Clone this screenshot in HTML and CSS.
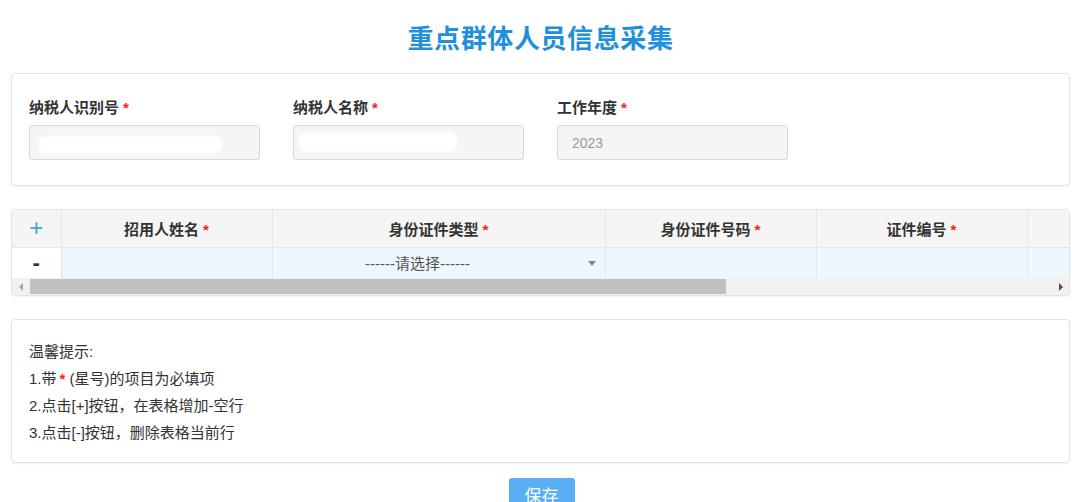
FILE: index.html
```html
<!DOCTYPE html>
<html lang="zh-CN">
<head>
<meta charset="utf-8">
<title>重点群体人员信息采集</title>
<link rel="stylesheet" href="styles.css">
</head>
<body>
<div class="page">
  <h1 class="title">重点群体人员信息采集</h1>

  <div class="panel form-panel">
    <div class="field">
      <div class="label">纳税人识别号<span class="req">*</span></div>
      <div class="input"><span class="smudge smudge-a"></span></div>
    </div>
    <div class="field">
      <div class="label">纳税人名称<span class="req">*</span></div>
      <div class="input"><span class="smudge smudge-b"></span></div>
    </div>
    <div class="field">
      <div class="label">工作年度<span class="req">*</span></div>
      <div class="input"><span class="value">2023</span></div>
    </div>
  </div>

  <div class="panel table-panel">
    <div class="table-clip">
      <table class="grid">
        <colgroup>
          <col class="c-op"><col class="c-w"><col class="c-wide"><col class="c-w"><col class="c-w"><col class="c-w"><col class="c-rest">
        </colgroup>
        <thead>
          <tr>
            <th class="op plus">+</th>
            <th>招用人姓名<span class="req">*</span></th>
            <th>身份证件类型<span class="req">*</span></th>
            <th>身份证件号码<span class="req">*</span></th>
            <th>证件编号<span class="req">*</span></th>
            <th></th>
            <th></th>
          </tr>
        </thead>
        <tbody>
          <tr>
            <td class="op minus">-</td>
            <td></td>
            <td class="select-cell"><span class="select-text">------请选择------</span><span class="caret"></span></td>
            <td></td>
            <td></td>
            <td></td>
            <td></td>
          </tr>
        </tbody>
      </table>
    </div>
    <div class="hscroll">
      <div class="sb-btn"><span class="tri-left"></span></div>
      <div class="sb-track">
        <div class="sb-thumb"></div>
      </div>
      <div class="sb-btn"><span class="tri-right"></span></div>
    </div>
  </div>

  <div class="panel tips-panel">
    <p>温馨提示:</p>
    <p>1.带<span class="req">*</span> (星号)的项目为必填项</p>
    <p>2.点击[+]按钮，在表格增加-空行</p>
    <p>3.点击[-]按钮，删除表格当前行</p>
  </div>

  <div class="actions">
    <button class="btn-save" type="button">保存</button>
  </div>
</div>
</body>
</html>
```

FILE: styles.css
```css
* { box-sizing: border-box; }

html, body {
  margin: 0;
  padding: 0;
  background: #ffffff;
  overflow: hidden;
}

body {
  font-family: "Liberation Sans", "Noto Sans CJK SC", sans-serif;
  color: #333333;
}

.page {
  padding: 0 10px 0 11px;
}

.title {
  margin: 0;
  padding-top: 21px;
  height: 73px;
  text-align: center;
  font-size: 26px;
  line-height: 36px;
  font-weight: 700;
  color: #1e90de;
  letter-spacing: 0.6px;
}

.panel {
  border: 1px solid #e3e3e3;
  border-radius: 4px;
  background: #ffffff;
  box-shadow: 0 1px 2px rgba(0, 0, 0, 0.06);
}

.req {
  color: #ff1a1a;
  font-weight: 700;
  margin-left: 4px;
}

/* form panel */
.form-panel {
  display: flex;
  gap: 33px;
  padding: 24px 17px 26px 17px;
  height: 113px;
}

.field {
  width: 231px;
}

.label {
  font-size: 15px;
  font-weight: 700;
  line-height: 20px;
  margin-bottom: 7px;
  color: #333;
}

.input {
  height: 35px;
  border: 1px solid #d9d9d9;
  border-radius: 3px;
  background: #f5f5f5;
  display: flex;
  align-items: center;
  padding: 0 14px;
}

.value {
  font-size: 14px;
  color: #999999;
}

.smudge {
  display: block;
  background: #ffffff;
  border-radius: 10px;
  filter: blur(1.5px);
}

.smudge-a {
  width: 185px;
  height: 18px;
  margin-left: -6px;
  margin-top: 4px;
}

.smudge-b {
  width: 160px;
  height: 20px;
  margin-left: -10px;
  margin-top: -2px;
}

/* table panel */
.table-panel {
  margin-top: 23px;
  overflow: hidden;
}

.table-clip {
  overflow: hidden;
}

.grid {
  border-collapse: collapse;
  table-layout: fixed;
  width: 1569px;
}

.c-op { width: 49px; }
.c-w { width: 211px; }
.c-wide { width: 333px; }
.c-rest { width: 343px; }

.grid th,
.grid td {
  border-right: 1px solid #e6e6e6;
  text-align: center;
  padding: 0;
}

.grid th {
  height: 37px;
  background: #f5f5f5;
  font-size: 15px;
  font-weight: 700;
  color: #333;
  border-bottom: 1px solid #e6e6e6;
}

.grid td {
  height: 31px;
  background: #eef6fe;
  font-size: 14px;
  color: #555;
}

.grid th.op {
  font-size: 24px;
  font-weight: 400;
  color: #3a9ff0;
}

.grid td.op {
  background: #ffffff;
  font-size: 22px;
  font-weight: 700;
  color: #333;
}

.select-cell {
  position: relative;
  padding-right: 42px !important;
}

.select-text {
  color: #555555;
  font-size: 15px;
}

.caret {
  position: absolute;
  right: 9px;
  top: 13px;
  width: 0;
  height: 0;
  border-left: 4px solid transparent;
  border-right: 4px solid transparent;
  border-top: 5px solid #888888;
}

.hscroll {
  display: flex;
  height: 17px;
  background: #f1f1f1;
}

.sb-btn {
  width: 17px;
  display: flex;
  align-items: center;
  justify-content: center;
  flex: none;
}

.sb-track {
  flex: 1;
  display: flex;
  padding: 1px 0 1px 1px;
}

.sb-thumb {
  width: 696px;
  background: #c1c1c1;
}

.tri-left {
  width: 0;
  height: 0;
  border-top: 4px solid transparent;
  border-bottom: 4px solid transparent;
  border-right: 4px solid #a3a3a3;
}

.tri-right {
  width: 0;
  height: 0;
  border-top: 4px solid transparent;
  border-bottom: 4px solid transparent;
  border-left: 4px solid #505050;
}

/* tips */
.tips-panel {
  margin-top: 23px;
  padding: 18px 17px;
  height: 144px;
}

.tips-panel p {
  margin: 0;
  font-size: 15px;
  line-height: 27px;
  color: #333;
}

.tips-panel .req {
  margin: 0 0 0 3px;
}

/* actions */
.actions {
  display: flex;
  justify-content: center;
  padding-top: 15px;
}

.btn-save {
  width: 66px;
  height: 32px;
  border: none;
  border-radius: 3px;
  background: #5aaef3;
  color: #ffffff;
  font-family: "Liberation Sans", "Noto Sans CJK SC", sans-serif;
  font-size: 17px;
  margin-left: 2px;
}
```
